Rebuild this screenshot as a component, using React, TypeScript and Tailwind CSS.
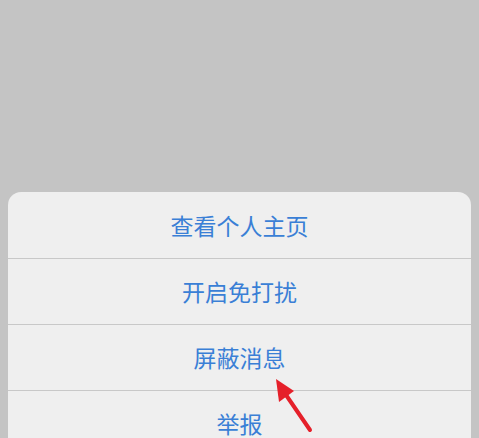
import React from "react";

const items = ["查看个人主页", "开启免打扰", "屏蔽消息", "举报"];

const Arrow: React.FC = () => (
  <svg
    className="absolute left-[262px] top-[372px]"
    width="56"
    height="66"
    viewBox="0 0 56 66"
  >
    <line x1="48" y1="58" x2="22" y2="20" stroke="#e5202a" strokeWidth="4" strokeLinecap="round" />
    <polygon points="14,7 17,30 32,19" fill="#e5202a" />
  </svg>
);

export default function App() {
  return (
    <div
      className="relative h-[438px] w-[479px] overflow-hidden bg-[#c4c4c4] pt-[192px] px-2"
      style={{ fontFamily: '"Noto Sans CJK SC", "Noto Sans", sans-serif' }}
    >
      <div className="rounded-t-[13px] bg-[#efefef]">
        {items.map((label, i) => (
          <div
            key={label}
            className={
              "flex h-[66px] items-center justify-center text-[23px] text-[#3a7fd6] " +
              (i > 0 ? "border-t border-[#c8c8c8]" : "")
            }
          >
            {label}
          </div>
        ))}
      </div>
      <Arrow />
    </div>
  );
}
